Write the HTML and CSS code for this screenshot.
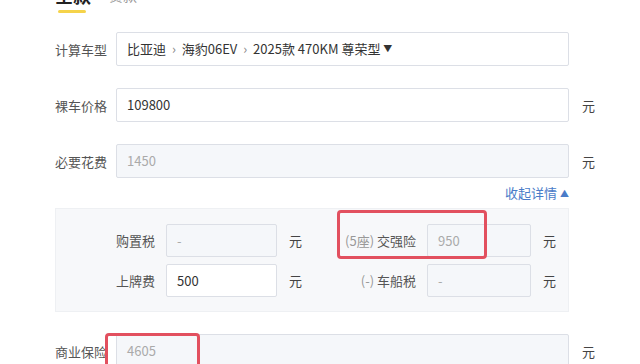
FILE: index.html
```html
<!DOCTYPE html>
<html lang="zh-CN">
<head>
    <meta charset="UTF-8">
    <meta name="viewport" content="width=device-width, initial-scale=1.0">
    <title>购车计算器</title>
    <link rel="stylesheet" href="styles.css">
</head>
<body>
    <div class="tabs">
        <div class="tab active">全款<i></i></div>
        <div class="tab">贷款</div>
    </div>

    <div class="form">
        <div class="row">
            <span class="label">计算车型</span>
            <div class="field select">比亚迪 <em>›</em> 海豹06EV <em>›</em> 2025款 470KM 尊荣型 <b>▼</b></div>
        </div>
        <div class="row">
            <span class="label">裸车价格</span>
            <div class="field">109800</div>
            <span class="unit">元</span>
        </div>
        <div class="row">
            <span class="label">必要花费</span>
            <div class="field disabled">1450</div>
            <span class="unit">元</span>
        </div>
        <div class="toggle"><a href="#">收起详情 <small>▲</small></a></div>

        <div class="panel">
            <span class="sub-label">购置税</span>
            <div class="field small disabled">-</div>
            <span class="unit">元</span>
            <span class="sub-label"><span class="hint">(5座)</span> 交强险</span>
            <div class="field small disabled">950</div>
            <span class="unit">元</span>

            <span class="sub-label">上牌费</span>
            <div class="field small">500</div>
            <span class="unit">元</span>
            <span class="sub-label"><span class="hint">(-)</span> 车船税</span>
            <div class="field small disabled">-</div>
            <span class="unit">元</span>
        </div>

        <div class="row last">
            <span class="label">商业保险</span>
            <div class="field disabled">4605</div>
            <span class="unit">元</span>
        </div>
    </div>

    <div class="mark one"></div>
    <div class="mark two"></div>
</body>
</html>
```

FILE: styles.css
```css
body {
    margin: 0;
    background: #fff;
    color: #333;
    font-family: "Noto Sans CJK SC", "Liberation Sans", sans-serif;
    font-size: 13px;
    position: relative;
    height: 364px;
    overflow: hidden;
}
.tabs {
    display: flex;
    gap: 18px;
    padding-left: 55px;
    margin-top: -14px;
}
.tab {
    font-size: 14px;
    line-height: 18px;
    color: #999;
}
.tab.active {
    font-size: 18px;
    font-weight: bold;
    color: #222;
}
.tab i {
    display: block;
    width: 28px;
    height: 3px;
    margin: 6px 0 0 3px;
    background: #f5d34a;
    border-radius: 2px;
}
.form {
    width: 560px;
    padding: 19px 0 0 55px;
}
.row {
    display: flex;
    align-items: center;
    height: 34px;
    margin-bottom: 22px;
}
.row.last {
    margin-top: 22px;
}
.label {
    flex: none;
    width: 49px;
    margin-right: 12px;
    color: #555;
    white-space: nowrap;
}
.field {
    flex: none;
    box-sizing: border-box;
    width: 453px;
    height: 34px;
    line-height: 32px;
    padding: 0 10px;
    border: 1px solid #dcdfe6;
    border-radius: 2px;
    background: #fff;
    color: #333;
}
.field.disabled {
    background: #f5f7fa;
    color: #aaa;
}
.select em {
    font-style: normal;
    color: #888;
    margin: 0 3px;
}
.select b {
    font-size: 9px;
    font-weight: normal;
    vertical-align: 2px;
}
.unit {
    margin-left: 13px;
    color: #444;
}
.toggle {
    width: 514px;
    text-align: right;
    line-height: 20px;
    margin: -17px 0 4px 0;
}
.toggle a {
    color: #4a7cc8;
    text-decoration: none;
}
.toggle small {
    font-size: 9px;
    vertical-align: 1px;
}
.panel {
    width: 512px;
    display: grid;
    grid-template-columns: 99px 111px 12px 105px 104px 12px;
    column-gap: 11px;
    row-gap: 7px;
    align-items: center;
    padding: 15px 0 14px;
    background: #f7f8fa;
    border: 1px solid #eef0f3;
}
.panel .unit {
    margin-left: 1px;
}
.sub-label {
    text-align: right;
    color: #555;
    white-space: nowrap;
}
.hint {
    color: #999;
}
.field.small {
    width: auto;
    height: 33px;
    line-height: 31px;
}
.mark {
    position: absolute;
    border: 3px solid #e2505f;
    border-radius: 4px;
    box-sizing: border-box;
}
.mark.one {
    left: 337px;
    top: 210px;
    width: 150px;
    height: 49px;
}
.mark.two {
    left: 105px;
    top: 333px;
    width: 95px;
    height: 40px;
}
```
